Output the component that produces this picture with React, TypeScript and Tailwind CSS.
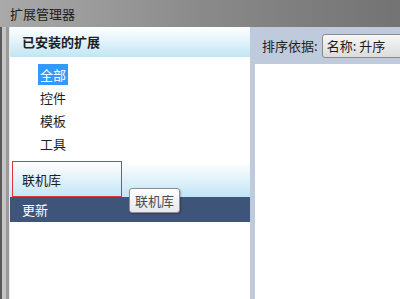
import React from "react";

const font = { fontFamily: '"Noto Sans CJK SC", "Noto Sans", sans-serif' };

export default function App() {
  return (
    <div
      className="w-[400px] h-[299px] flex flex-col overflow-hidden bg-[#7d7d7d] text-[13px] text-[#1e1e1e]"
      style={font}
    >
      {/* Title bar */}
      <div className="h-[27px] shrink-0 flex items-center pl-[10px] bg-gradient-to-r from-[#a9a9a9] via-[#8a8a8a] to-[#737373]">
        <span className="text-[13px] text-[#202020] leading-none">扩展管理器</span>
      </div>
      <div className="flex flex-1 min-h-0">
        {/* left window frame */}
        <div className="w-[10px] shrink-0 flex">
          <div className="w-[2px] bg-[#5a5a5a]" />
          <div className="w-[4px] bg-[#c4c4c4]" />
          <div className="w-[3px] bg-[#9a9a9a]" />
          <div className="w-[1px] bg-[#e8e8e8]" />
        </div>
        {/* left panel */}
        <div className="w-[240px] shrink-0 flex flex-col bg-white relative">
          <div className="h-[30px] flex items-center pl-[12px] bg-gradient-to-b from-white to-[#c2e5f5] font-bold">
            已安装的扩展
          </div>
          <div className="flex flex-col pl-[28px] pt-[6px]">
            <div className="h-[23px] flex items-center">
              <span className="bg-[#3399ff] text-white px-[2px] h-[21px] flex items-center">全部</span>
            </div>
            <div className="h-[23px] flex items-center pl-[2px]">控件</div>
            <div className="h-[23px] flex items-center pl-[2px]">模板</div>
            <div className="h-[23px] flex items-center pl-[2px]">工具</div>
          </div>
          <div className="mt-[7px] h-[35px] flex items-center pl-[12px] bg-gradient-to-b from-white to-[#c2e5f5]">
            联机库
          </div>
          <div className="h-[25px] flex items-center pl-[12px] bg-[#3f5479] text-white">更新</div>
          <div className="flex-1 bg-white" />
          {/* red outline */}
          <div className="absolute left-[2px] top-[134px] w-[110px] h-[36px] border border-[#e0343a]" />
          {/* tooltip */}
          <div className="absolute left-[119px] top-[161px] w-[51px] h-[25px] rounded-[3px] border border-[#8f8f8f] bg-gradient-to-b from-white to-[#e6e8ee] flex items-center justify-center text-[13px] text-[#4c4c4c] shadow-[1px_1px_2px_rgba(0,0,0,0.25)]">
            联机库
          </div>
        </div>
        {/* right panel */}
        <div className="flex-1 flex flex-col bg-[#bfcbdc]">
          <div className="h-[37px] shrink-0 flex items-center pl-[12px] gap-[4px]">
            <span className="text-[13px] text-[#1e1e1e]">排序依据:</span>
            <div className="flex-1 h-[24px] -mr-[4px] rounded-[3px] border border-[#8a8a8a] bg-gradient-to-b from-[#f7f7f7] to-[#dcdcdc] flex items-center pl-[4px] text-[13px] text-[#1e1e1e]">
              名称: 升序
            </div>
          </div>
          <div className="flex-1 ml-[5px] bg-white" />
        </div>
      </div>
    </div>
  );
}
